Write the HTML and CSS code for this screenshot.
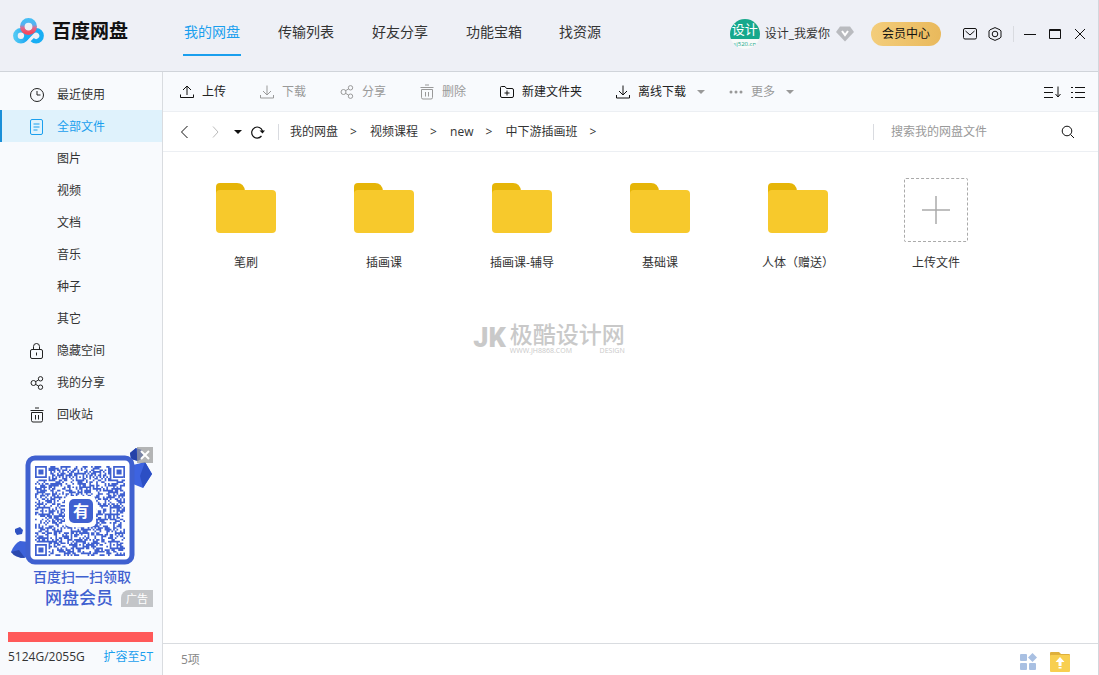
FILE: index.html
```html
<!DOCTYPE html>
<html lang="zh-CN">
<head>
<meta charset="utf-8">
<title>百度网盘</title>
<link rel="stylesheet" href="styles.css">
</head>
<body>
<svg class="sprite" aria-hidden="true">
  <symbol id="i-download" viewBox="0 0 14 14"><path d="M7 0.500V9.500M3 6l4 4 4-4M0.500 10v3h13v-3"/></symbol>
  <symbol id="i-share" viewBox="0 0 14 14"><circle cx="3.500" cy="7" r="2.500"/><circle cx="10.500" cy="2.800" r="2.200"/><circle cx="10.500" cy="11.200" r="2.200"/><path d="M5.600 5.700l3-1.800M5.600 8.300l3 1.800"/></symbol>
  <symbol id="i-trash" viewBox="0 0 14 16"><path d="M5 1h4M0.500 3.500h13M1.500 5.500v8a1.500 1.500 0 0 0 1.500 1.500h8a1.500 1.500 0 0 0 1.500-1.500v-8zM5.500 8v4.500M8.500 8v4.500"/></symbol>
  <symbol id="i-folder" viewBox="0 0 60 52"><path d="M0 14V5a4 4 0 0 1 4-4h17q7 0 8 8v5z" fill="#e6b507"/><rect y="8" width="60" height="43" rx="4" fill="#f7c92c"/></symbol>
</svg>
<div class="app">
  <header class="header">
    <a class="brand" href="#">
      <svg width="31" height="26" viewBox="0 0 31 26" fill="none" stroke-width="4.600">
        <defs>
          <linearGradient id="logo-side" x1="0" x2="1"><stop offset="0" stop-color="#4fc8f4"/><stop offset="1" stop-color="#1fa8f3"/></linearGradient>
          <linearGradient id="logo-top" x1="0" y1="0" x2="0" y2="1"><stop offset="0" stop-color="#45bdf5"/><stop offset="0.350" stop-color="#58aff0"/><stop offset="0.600" stop-color="#e2688c"/><stop offset="1" stop-color="#f5485f"/></linearGradient>
        </defs>
        <circle cx="7.900" cy="17.800" r="5.500" stroke="url(#logo-side)"/>
        <path d="M19.200 21.700a5.500 5.500 0 1 0 0-7.800L12 21.500" stroke="#18aef4"/>
        <circle cx="15.500" cy="8.600" r="6.200" stroke="url(#logo-top)"/>
      </svg>
      <span>百度网盘</span>
    </a>
    <nav class="nav">
      <a class="nav-link nav-current" href="#">我的网盘</a>
      <a class="nav-link" href="#">传输列表</a>
      <a class="nav-link" href="#">好友分享</a>
      <a class="nav-link" href="#">功能宝箱</a>
      <a class="nav-link" href="#">找资源</a>
    </nav>
    <div class="account">
      <span class="avatar"><b>设计</b><small>sj520.cn</small></span>
      <span class="user">设计_我爱你</span>
      <svg class="gem" width="18" height="16" viewBox="0 0 18 16"><path d="M4 0.500h10L18 6 9 15.500 0 6z" fill="#b9bbbf"/><path d="M6 5l3 4 3-4" fill="none" stroke="#fff" stroke-width="2"/></svg>
      <button class="member">会员中心</button>
    </div>
    <div class="tools">
      <button class="icon-btn" aria-label="消息"><svg width="14" height="14" viewBox="0 0 14 14" class="line"><rect x="0.500" y="1.500" width="13" height="10.500" rx="1.500"/><path d="M2.500 4L7 8l4.500-4"/></svg></button>
      <button class="icon-btn" aria-label="设置"><svg width="14" height="14" viewBox="0 0 14 14" class="line"><path d="M7 0.600l5 2.200 1 1.200v6l-1 1.200-5 2.200-5-2.200L1 10V4l1-1.200z"/><circle cx="7" cy="7" r="2.800"/></svg></button>
    </div>
    <span class="divider"></span>
    <div class="window-buttons">
      <button class="icon-btn" aria-label="最小化"><svg width="12" height="12" viewBox="0 0 12 12" class="line"><path d="M0 6.500h12"/></svg></button>
      <button class="icon-btn" aria-label="最大化"><svg width="12" height="12" viewBox="0 0 12 12" class="line"><path d="M0.500 1.500h11v9H0.500zM0.500 2.500h11"/></svg></button>
      <button class="icon-btn" aria-label="关闭"><svg width="12" height="12" viewBox="0 0 12 12" class="line"><path d="M1 1l10 10M11 1L1 11"/></svg></button>
    </div>
  </header>

  <aside class="sidebar">
    <nav class="menu">
      <a class="menu-item" href="#"><svg width="16" height="16" viewBox="0 0 16 16" class="line"><circle cx="8" cy="8" r="6.500"/><path d="M8 4v4h3.500"/></svg>最近使用</a>
      <a class="menu-item menu-current" href="#"><svg width="16" height="16" viewBox="0 0 16 16" class="line"><rect x="1.500" y="0.500" width="12" height="15" rx="1.500"/><path d="M4.500 5h6M4.500 8h6M4.500 11h4"/></svg>全部文件</a>
      <a class="menu-item menu-sub" href="#">图片</a>
      <a class="menu-item menu-sub" href="#">视频</a>
      <a class="menu-item menu-sub" href="#">文档</a>
      <a class="menu-item menu-sub" href="#">音乐</a>
      <a class="menu-item menu-sub" href="#">种子</a>
      <a class="menu-item menu-sub" href="#">其它</a>
      <a class="menu-item" href="#"><svg width="16" height="16" viewBox="0 0 16 16" class="line"><rect x="1.500" y="6.500" width="12" height="9" rx="1.500"/><path d="M4.500 6.500V3.500a3 3 0 0 1 6 0v3M7.500 9.500v3"/></svg>隐藏空间</a>
      <a class="menu-item" href="#"><svg width="16" height="14" class="line"><use href="#i-share" width="14" height="14" x="1"/></svg>我的分享</a>
      <a class="menu-item" href="#"><svg width="16" height="16" class="line"><use href="#i-trash" width="14" height="16" x="1"/></svg>回收站</a>
    </nav>
    <section class="promo" aria-label="广告">
      <svg class="promo-art" viewBox="0 0 142 120">
        <g>
          <path d="M119 6l6-5 6 2 2 7-6 4-7-2z" fill="#3558c8"/><path d="M119 6l6-5 2 13-7-2z" fill="#2442a8"/>
          <path d="M122 18l12-3 7 12-9 14-10-4z" fill="#3d63e0"/><path d="M134 15l7 12-9 14-3-12z" fill="#2c4fc4"/>
          <path d="M4 82l5-2 3 3-1 4-5 1-2-3z" fill="#2f52c2"/>
          <path d="M0 105q3-8 9-11l9 1 2 15-10 1z" fill="#3d62da"/><path d="M0 105l8-2 6 8q-10 0-14-6z" fill="#2b49ae"/>
        </g>
        <rect x="17" y="11" width="104" height="104" rx="7" fill="#fff" stroke="#3f60d0" stroke-width="5"/>
        <svg x="24" y="19" width="90" height="90" viewBox="0 0 53 53"><path id="qr-modules" fill="#3f60d0"/></svg>
        <rect x="54" y="49" width="31" height="31" rx="5" fill="#fff"/>
        <rect x="58" y="52" width="24" height="24" rx="5" fill="#3f60d0"/>
        <text x="70" y="70" class="promo-logo">有</text>
      </svg>
      <button class="promo-close" aria-label="关闭广告"><svg width="10" height="10" viewBox="0 0 10 10"><path d="M1 1l8 8M9 1L1 9" stroke="#fff" stroke-width="2"/></svg></button>
      <p class="promo-line">百度扫一扫领取</p>
      <p class="promo-title"><strong>网盘会员</strong><span class="promo-tag">广告</span></p>
    </section>
    <div class="quota">
      <div class="quota-bar" role="progressbar" aria-label="容量" aria-valuenow="100"></div>
      <div class="quota-text"><span>5124G/2055G</span><a href="#">扩容至5T</a></div>
    </div>
  </aside>

  <main class="main">
    <div class="toolbar">
      <button class="tool"><svg width="14" height="14" viewBox="0 0 14 14" class="line"><path d="M7 10V1.500M3 5l4-4 4 4M0.500 9.500v3h13v-3"/></svg>上传</button>
      <button class="tool tool-off"><svg width="14" height="14" class="line"><use href="#i-download"/></svg>下载</button>
      <button class="tool tool-off"><svg width="14" height="14" class="line"><use href="#i-share"/></svg>分享</button>
      <button class="tool tool-off"><svg width="14" height="16" class="line"><use href="#i-trash"/></svg>删除</button>
      <button class="tool"><svg width="14" height="14" viewBox="0 0 14 14" class="line"><path d="M0.500 11V2.500a1 1 0 0 1 1-1h3.500l1.500 2h5.500a1.500 1.500 0 0 1 1.500 1.500v6a1.500 1.500 0 0 1-1.500 1.500H2A1.500 1.500 0 0 1 0.500 11zM7 5.500v5M4.500 8h5"/></svg>新建文件夹</button>
      <button class="tool tool-drop"><svg width="14" height="14" class="line"><use href="#i-download"/></svg>离线下载<i class="caret"></i></button>
      <button class="tool tool-drop tool-off"><svg width="14" height="14" viewBox="0 0 14 14" fill="currentColor"><circle cx="2" cy="7" r="1.500"/><circle cx="7" cy="7" r="1.500"/><circle cx="12" cy="7" r="1.500"/></svg>更多<i class="caret"></i></button>
      <div class="view">
        <button class="icon-btn" aria-label="排序"><svg width="17" height="12" viewBox="0 0 17 12" class="line"><path d="M0 1.500h9M0 6.500h9M0 11.500h9M14 0.500v10M11.500 8l2.500 3 2.500-3"/></svg></button>
        <button class="icon-btn" aria-label="列表"><svg width="14" height="12" viewBox="0 0 14 12" class="line"><path d="M0 1.500h2M4 1.500h10M0 6.500h2M4 6.500h10M0 11.500h2M4 11.500h10"/></svg></button>
      </div>
    </div>

    <div class="pathbar">
      <div class="history">
        <button class="icon-btn" aria-label="后退"><svg width="9" height="14" viewBox="0 0 9 14" class="line"><path d="M7.500 1L1.500 7l6 6"/></svg></button>
        <button class="icon-btn pale" aria-label="前进"><svg width="9" height="14" viewBox="0 0 9 14" class="line"><path d="M2 1.500L7 7l-5 5.500"/></svg></button>
        <div class="history-more">
          <button class="icon-btn" aria-label="历史"><i class="caret caret-dark"></i></button>
          <button class="icon-btn" aria-label="刷新"><svg width="14" height="14" viewBox="0 0 14 14" class="line"><path d="M10.500 11a5.500 5.500 0 1 1 1-5" stroke-width="1.200"/><path d="M8.500 5.500h5.500L11.500 8.500z" fill="currentColor" stroke="none"/></svg></button>
        </div>
      </div>
      <span class="divider"></span>
      <nav class="crumbs">
        <a href="#">我的网盘</a><span>&gt;</span><a href="#">视频课程</a><span>&gt;</span><a href="#">new</a><span>&gt;</span><a href="#">中下游插画班</a><span>&gt;</span>
      </nav>
      <form class="search">
        <span class="divider"></span>
        <input type="text" aria-label="搜索" placeholder="搜索我的网盘文件">
        <button class="icon-btn" type="button" aria-label="搜索"><svg width="14" height="14" viewBox="0 0 14 14" class="line"><circle cx="6" cy="6" r="4.800"/><path d="M9.500 9.500l3.500 3.500"/></svg></button>
      </form>
    </div>

    <div class="files">
      <a class="file" href="#"><span class="thumb"><svg width="60" height="52"><use href="#i-folder"/></svg></span>笔刷</a>
      <a class="file" href="#"><span class="thumb"><svg width="60" height="52"><use href="#i-folder"/></svg></span>插画课</a>
      <a class="file" href="#"><span class="thumb"><svg width="60" height="52"><use href="#i-folder"/></svg></span>插画课-辅导</a>
      <a class="file" href="#"><span class="thumb"><svg width="60" height="52"><use href="#i-folder"/></svg></span>基础课</a>
      <a class="file" href="#"><span class="thumb"><svg width="60" height="52"><use href="#i-folder"/></svg></span>人体（赠送）</a>
      <button class="file"><span class="thumb thumb-add"><svg width="28" height="28" viewBox="0 0 28 28"><path d="M14 0v28M0 14h28" stroke="#aaa" stroke-width="1.500"/></svg></span>上传文件</button>
    </div>

    <footer class="status">
      <span>5项</span>
      <div class="status-icons">
        <button class="icon-btn" aria-label="工具"><svg width="18" height="18" viewBox="0 0 18 18" fill="#a9c0e2"><rect x="1" y="1" width="7" height="7" rx="1"/><path d="M13.500 0L18 4.500 13.500 9 9 4.500z"/><rect x="1" y="10" width="7" height="7" rx="1"/><rect x="10" y="10" width="7" height="7" rx="1"/></svg></button>
        <button class="icon-btn" aria-label="上传文件夹"><svg width="20" height="20" viewBox="0 0 20 20"><path d="M0 6V1q0-1 1-1h8l2 2h8q1 0 1 1v3z" fill="#dfb03c"/><rect y="3" width="20" height="17" rx="1" fill="#f8cf50"/><path d="M10 5l4.500 5h-3v4h-3v-4h-3zM8.500 15h3v1.500h-3z" fill="#fff"/></svg></button>
      </div>
    </footer>
  </main>

  <div class="watermark" aria-hidden="true">
    <span class="mark">JK</span>
    <span class="mark-name"><b>极酷设计网</b><small><span>WWW.JH8868.COM</span><span>DESIGN</span></small></span>
  </div>
</div>
<script src="qr.js"></script>
</body>
</html>
```
FILE: styles.css
```css
* { box-sizing: border-box; }
body {
  margin: 0;
  font: 12px/20px "Open Sans", "Noto Sans CJK SC", sans-serif;
  color: #333;
}
a { color: inherit; text-decoration: none; }
p { margin: 0; }
svg { display: block; flex: none; }
button { font: inherit; color: inherit; background: none; border: 0; padding: 0; margin: 0; cursor: pointer; }
.sprite { display: none; }
.line { fill: none; stroke: currentColor; }

.app {
  position: relative;
  min-height: 100vh;
  display: grid;
  grid-template: auto 1fr / 163px 1fr;
  background: #fff;
  border-right: 1px solid #d3d6dc;
}
.icon-btn { display: flex; align-items: center; justify-content: center; color: #111; }
.pale { color: #bbb; }
.divider { width: 1px; height: 16px; background: #d9dbe0; }
.caret { border: 4px solid transparent; border-top: 4px solid #999; border-bottom: 0; }
.caret-dark { border-top-color: #111; }

.header {
  grid-column: 1 / -1;
  height: 72px;
  display: flex;
  align-items: center;
  padding: 0 12px 4px 13px;
  background: #eef0f6;
  border-bottom: 1px solid #d0d4da;
}
.brand { display: flex; align-items: center; gap: 8px; width: 170px; padding-bottom: 5px; color: #111; font-size: 19px; line-height: 26px; font-weight: 700; }
.nav { display: flex; gap: 36px; flex: 1; font-size: 14px; }
.nav-link { min-width: 58px; height: 45px; padding-top: 11px; border-bottom: 2px solid transparent; text-align: center; }
.nav-current { color: #1a9fee; border-color: #1a9fee; }
.nav-link:last-child { text-align: left; }
.account { display: flex; align-items: center; }
.avatar {
  width: 30px; height: 30px; border-radius: 50%; overflow: hidden;
  background: linear-gradient(#16a88c 66%, #f8faf9 66%);
  display: flex; flex-direction: column; align-items: center;
}
.avatar b { font-size: 13px; line-height: 21px; font-weight: 400; color: #fff; }
.avatar small { font-size: 6px; line-height: 8px; color: #16a88c; }
.user { margin: 0 6px 0 5px; }
.member { margin-left: 17px; width: 70px; height: 24px; border-radius: 12px; background: linear-gradient(90deg, #f3cd7b, #e9b95c); color: #111; }
.tools { display: flex; gap: 11px; margin: 0 11px 0 22px; }
.window-buttons { display: flex; gap: 13px; margin-left: 10px; }

.sidebar { display: flex; flex-direction: column; padding-top: 6px; background: #f8fafd; border-right: 1px solid #d9dce0; }
.menu-item { display: flex; align-items: center; gap: 12px; height: 32px; padding: 1px 0 0 27px; border-left: 2px solid transparent; }
.menu-item svg { color: #222; }
.menu-current { background: #dff2fc; border-color: #1a8fd8; color: #1a9fee; }
.menu-current svg { color: #1a9fee; }
.menu-sub { padding-left: 55px; }
.promo { position: relative; margin: auto 9px 23px 11px; color: #3f60d0; }
.promo-art { width: 100%; }
.promo-logo { font-size: 16px; font-weight: 700; fill: #fff; text-anchor: middle; }
.promo-close { position: absolute; top: 0; right: 0; width: 16px; height: 16px; display: flex; align-items: center; justify-content: center; background: rgba(150, 150, 150, .7); }
.promo-line { text-align: center; font-size: 14px; font-weight: 500; }
.promo-title { display: flex; align-items: center; justify-content: flex-end; gap: 8px; font-size: 17px; line-height: 22px; }
.promo-title strong { font-weight: 500; }
.promo-tag { width: 32px; border-radius: 8px 0 0 0; background: #c3c5c8; color: #fff; font-size: 11px; line-height: 17px; text-align: center; }
.quota { padding: 0 9px 8px 8px; }
.quota-bar { height: 10px; margin-bottom: 5px; background: #ff5959; }
.quota-text { display: flex; justify-content: space-between; }
.quota-text a { color: #1a9fee; }

.main { display: flex; flex-direction: column; min-width: 0; }
.toolbar, .pathbar { display: flex; align-items: center; height: 40px; padding: 0 13px 0 17px; border-bottom: 1px solid #eceff3; }
.toolbar { background: #f8fafd; }
.tool { display: flex; align-items: center; gap: 8px; margin-right: 34px; color: #222; }
.tool svg { color: #111; }
.tool-off, .tool-off svg { color: #999; }
.tool-drop { margin-right: 24px; }
.tool-drop .caret { margin-left: 3px; }
.view { display: flex; gap: 10px; margin-left: auto; }
.history { display: flex; align-items: center; gap: 22px; margin-right: 13px; }
.history-more { display: flex; gap: 9px; margin-left: -8px; }
.crumbs { display: flex; gap: 12px; margin-left: 11px; }
.crumbs span { min-width: 8px; }
.search { display: flex; align-items: center; width: 212px; margin-left: auto; }
.search input { flex: 1; min-width: 0; margin: 0 8px 0 17px; padding: 0; border: 0; outline: 0; background: none; font: inherit; }
.search input::placeholder { color: #999; opacity: 1; }
.search .icon-btn { margin-right: 10px; }

.files { flex: 1; display: grid; grid-template-columns: repeat(auto-fill, 138px); align-content: start; padding: 26px 14px; }
.file { display: flex; flex-direction: column; align-items: center; gap: 11px; }
.thumb { width: 64px; height: 64px; padding-bottom: 4px; display: flex; align-items: center; justify-content: center; }
.thumb-add { padding: 0; border: 1px dashed #aaa; border-radius: 2px; }
.status { display: flex; align-items: center; height: 32px; padding: 0 28px 0 18px; border-top: 1px solid #d9dce0; color: #888; }
.status-icons { display: flex; gap: 13px; margin-left: auto; padding-top: 5px; }

.watermark { position: absolute; left: 50%; top: 50%; transform: translate(-50%, -50%); display: flex; align-items: center; gap: 4px; color: #c9c9c9; pointer-events: none; }
.mark { font: 900 27px/32px "Roboto", sans-serif; }
.mark-name { display: flex; flex-direction: column; }
.mark-name b { font-size: 23px; line-height: 26px; font-weight: 500; }
.mark-name small { display: flex; justify-content: space-between; font-size: 7px; line-height: 8px; }
```
FILE: qr.js
```js
// Fills the QR artwork: three finders, alignment marks, timing rows and data modules.
const SIZE = 53;
const CENTERS = [6, 26, 46];
let seed = 20557;

function nextBit() {
  seed = (seed * 1103515245 + 12345) % 2147483648;
  return seed / 2147483648 < 0.5;
}

function ring(x, y, cx, cy) {
  return Math.max(Math.abs(x - cx), Math.abs(y - cy));
}

function isDark(x, y) {
  const random = nextBit();
  for (const [cx, cy] of [[3, 3], [SIZE - 4, 3], [3, SIZE - 4]]) {
    const d = ring(x, y, cx, cy);
    if (d <= 4) return d !== 2 && d !== 4;
  }
  for (const cx of CENTERS) {
    for (const cy of CENTERS) {
      const d = ring(x, y, cx, cy);
      if (d <= 2 && cx + cy > 30) return d !== 1;
    }
  }
  if (x === 6 || y === 6) return (x + y) % 2 === 0;
  return random;
}

let path = "";
for (let y = 0; y < SIZE; y++) {
  for (let x = 0; x < SIZE; x++) {
    if (isDark(x, y)) path += `M${x} ${y}h1v1h-1z`;
  }
}
document.getElementById("qr-modules").setAttribute("d", path);
```
